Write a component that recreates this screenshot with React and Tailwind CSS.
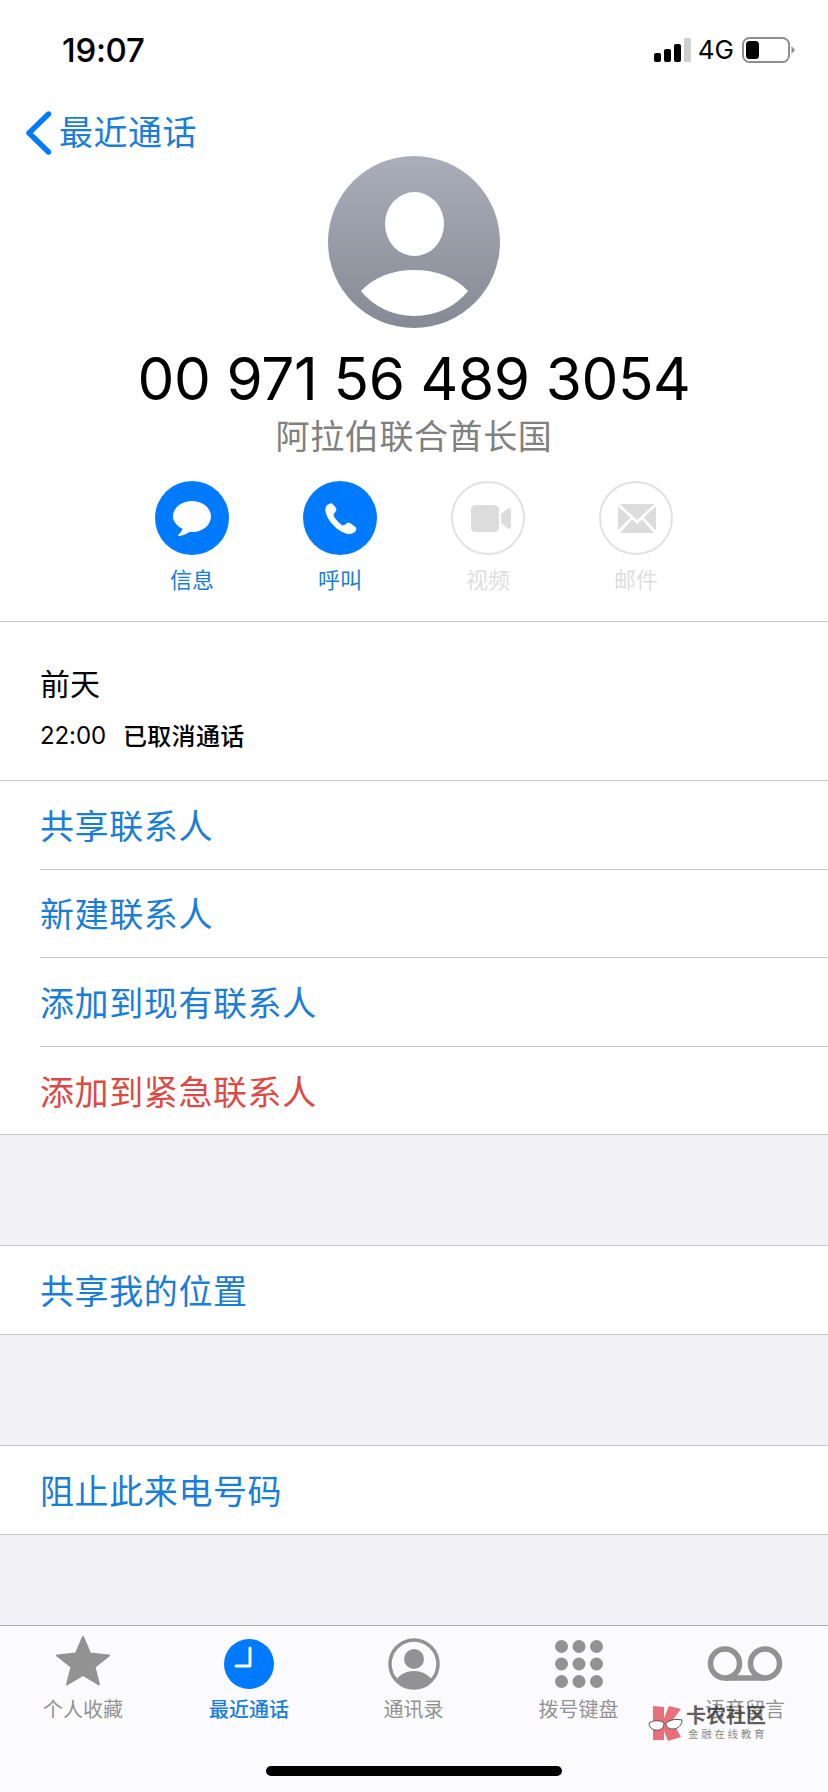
const CJK = { fontFamily: '"Noto Sans CJK SC", sans-serif' };

function Signal() {
  return (
    <svg width="38" height="24" viewBox="0 0 38 24" className="block">
      <rect x="0" y="15" width="7" height="9" rx="2" fill="#000" />
      <rect x="10" y="11" width="7" height="13" rx="2" fill="#000" />
      <rect x="20" y="6" width="7" height="18" rx="2" fill="#000" />
      <rect x="30" y="0" width="7" height="24" rx="1.5" fill="#cfcfcf" />
    </svg>
  );
}

function Battery() {
  return (
    <svg width="54" height="26" viewBox="0 0 54 26" className="block">
      <rect x="1" y="1" width="46" height="24" rx="6.5" fill="none" stroke="#8e8e8e" strokeWidth="2" />
      <rect x="4" y="4" width="13" height="18" rx="3.5" fill="#000" />
      <path d="M49.5 9 L53 13 L49.5 17 Z" fill="#8e8e8e" />
    </svg>
  );
}

function Avatar() {
  return (
    <svg width="172" height="172" viewBox="0 0 172 172" className="block">
      <defs>
        <linearGradient id="av" x1="0" y1="0" x2="0" y2="1">
          <stop offset="0" stopColor="#a9aeba" />
          <stop offset="1" stopColor="#858a95" />
        </linearGradient>
      </defs>
      <circle cx="86" cy="86" r="86" fill="url(#av)" />
      <ellipse cx="86.5" cy="68" rx="29.5" ry="32" fill="#fff" />
      <path d="M33 135 C46 121 65 114 86 114 C108 114 127 121 140 135 C127 151 108 160 86 160 C65 160 46 151 33 135 Z" fill="#fff" />
    </svg>
  );
}

function Action({ label, active, children }) {
  return (
    <div className="w-[148px] flex flex-col items-center">
      <div className={active ? "w-[74px] h-[74px] rounded-full bg-[#007aff]" : "w-[74px] h-[74px] rounded-full border-2 border-[#e2e2e2] bg-white"}>
        <svg width="74" height="74" viewBox="0 0 74 74" className={active ? "block" : "block -m-[2px]"}>{children}</svg>
      </div>
      <div style={CJK} className={active ? "mt-[7px] text-[22px] leading-[32px] text-[#1a7dd6]" : "mt-[7px] text-[22px] leading-[32px] text-[#dedede]"}>{label}</div>
    </div>
  );
}

function Row({ children, red, inset }) {
  return (
    <div className={inset ? "pl-[40px] bg-white" : "bg-white"}>
      <div className={"border-b border-[#c8c8cc] " + (inset ? "" : "pl-[40px] ") + "h-[88.6px] flex items-center"}>
        <span style={CJK} className={(red ? "text-[#dc4a44]" : "text-[#1a7dd6]") + " text-[34px] leading-none tracking-[0.6px]"}>{children}</span>
      </div>
    </div>
  );
}

function Tab({ w, label, active, children }) {
  return (
    <div className="flex flex-col items-center shrink-0" style={{ width: w }}>
      <div className="h-[56px] w-full flex items-center justify-center">{children}</div>
      <div style={CJK} className={(active ? "text-[#1a7dd6] font-medium" : "text-[#929292]") + " mt-[3px] text-[20px] leading-[28px] whitespace-nowrap"}>{label}</div>
    </div>
  );
}

export default function App() {
  return (
    <div className="relative w-[828px] h-[1792px] overflow-hidden bg-white flex flex-col" style={{ fontFamily: 'Inter, "Noto Sans CJK SC", sans-serif' }}>
      {/* status bar */}
      <div className="h-[88px] shrink-0 flex items-start justify-between pl-[62px] pr-[32px] pt-[30px]">
        <span className="text-[33px] leading-[40px] font-medium text-black tracking-[-0.3px]">19:07</span>
        <div className="flex items-center gap-[8px] pt-[7px]">
          <Signal />
          <span className="-ml-[2px] text-[26px] leading-[26px] text-black">4G</span>
          <Battery />
        </div>
      </div>

      {/* nav */}
      <div className="h-[68px] shrink-0 flex items-start pl-[25px] pt-[23px]">
        <svg width="28" height="44" viewBox="0 0 28 44" className="block">
          <path d="M23.5 3 L4 22 L23.5 41" fill="none" stroke="#007aff" strokeWidth="5.4" strokeLinecap="round" strokeLinejoin="round" />
        </svg>
        <span style={CJK} className="ml-[6px] -mt-[2px] text-[34px] leading-[44px] tracking-[0.5px] text-[#1a7dd6]">最近通话</span>
      </div>

      {/* avatar + name */}
      <div className="flex flex-col items-center shrink-0">
        <Avatar />
        <div className="mt-[14px] text-[58.5px] leading-[74px] text-black tracking-[-0.4px] whitespace-nowrap">00 971 56 489 3054</div>
        <div style={CJK} className="text-[34px] leading-[38px] text-[#808080] tracking-[0.6px]">阿拉伯联合酋长国</div>
      </div>

      {/* actions */}
      <div className="mt-[27px] flex justify-center shrink-0">
        <Action label="信息" active>
          <path d="M37 20 C47.5 20 56 27 56 35.5 C56 44 47.5 51 38 51 C37 51 36 51 35 50.8 C32 53 28 54.8 24 55 C23 55 22.8 54 23.5 53.5 C25.5 52 27 50 27.5 47.8 C22 45 18 40.5 18 35.5 C18 27 26.500 20 37 20 Z" fill="#fff" />
        </Action>
        <Action label="呼叫" active>
          <path d="M26 23 C23 24 22 27 22.500 30 C24 40 35 51 45 53 C48 53.500 51.500 52 53 49.500 C53.500 48 53.500 47 52.500 46 L47 42 C46 41.300 45 41.300 44 42 L41.500 44 C40.500 44.500 39.500 44.500 38.500 43.800 C35 41 33 38.500 31 35.500 C30.500 34.500 30.500 33.500 31.200 32.500 L33 30 C33.500 29 33.500 28 33 27 L29.500 23 C28.500 22 27.500 22.300 26 23 Z" fill="#fff" />
        </Action>
        <Action label="视频">
          <rect x="20" y="24" width="28" height="27" rx="4.5" fill="#dcdcdc" />
          <path d="M50 33 L57 27.500 Q60 26 60 29 V46 Q60 49 57 47.500 L50 42 Z" fill="#dcdcdc" />
        </Action>
        <Action label="邮件">
          <path d="M20.500 23 H55.500 L38 39 Z" fill="#dcdcdc" />
          <path d="M19 25.500 V49.500 L31.500 36.500 Z" fill="#dcdcdc" />
          <path d="M57 25.500 V49.500 L44.500 36.500 Z" fill="#dcdcdc" />
          <path d="M21 52 L33 38.500 L38 43 L43 38.500 L55 52 Z" fill="#dcdcdc" />
        </Action>
      </div>

      {/* call info */}
      <div className="mt-[27px] shrink-0 h-[159px] border-t border-[#c8c8cc] pl-[40px] pt-[42px]">
        <div style={CJK} className="text-[30px] leading-[36px] text-black">前天</div>
        <div className="mt-[19px] flex items-center h-[32px]">
          <span className="mt-[2px] text-[24px] leading-[32px] text-black tracking-[-0.1px]">22:00</span>
          <span style={CJK} className="ml-[17px] text-[24px] leading-[32px] text-black font-medium tracking-[0.3px]">已取消通话</span>
        </div>
      </div>

      <div className="border-t border-[#c8c8cc] shrink-0">
        <Row inset>共享联系人</Row>
        <Row inset>新建联系人</Row>
        <Row inset>添加到现有联系人</Row>
        <Row red>添加到紧急联系人</Row>
      </div>

      {/* grey area */}
      <div className="flex-1 bg-[#f1f1f6] flex flex-col">
        <div className="h-[110px] shrink-0" />
        <div className="border-t border-[#c8c8cc]"><Row>共享我的位置</Row></div>
        <div className="h-[110px] shrink-0" />
        <div className="border-t border-[#c8c8cc]"><Row>阻止此来电号码</Row></div>
      </div>

      {/* tab bar */}
      <div className="h-[167px] shrink-0 border-t border-[#a9a9ad] bg-[#fbfbfd] flex flex-col">
        <div className="flex pt-[10px]">
          <Tab w={166} label="个人收藏">
            <svg width="56" height="52" viewBox="0 0 56 52" className="block -mt-[6px]">
              <path d="M28 2 L35 18.500 L54 20.500 L39.500 32 L44 49.500 L28 40 L12 49.500 L16.500 32 L2 20.500 L21 18.500 Z" fill="#929292" stroke="#929292" strokeWidth="2" strokeLinejoin="round" />
            </svg>
          </Tab>
          <Tab w={166} label="最近通话" active>
            <svg width="50" height="50" viewBox="0 0 50 50" className="block">
              <circle cx="25" cy="25" r="25" fill="#007aff" />
              <path d="M26 9 V27 H12" fill="none" stroke="#fff" strokeWidth="3" strokeLinecap="round" strokeLinejoin="round" />
            </svg>
          </Tab>
          <Tab w={163} label="通讯录">
            <svg width="52" height="52" viewBox="0 0 52 52" className="block">
              <defs><clipPath id="cc"><circle cx="26" cy="26" r="24" /></clipPath></defs>
              <circle cx="26" cy="26" r="24" fill="none" stroke="#929292" strokeWidth="3.500" />
              <circle cx="26" cy="21" r="10" fill="#929292" />
              <path d="M4 52 C6 39 16 33 26 33 C36 33 46 39 48 52 Z" fill="#929292" clipPath="url(#cc)" />
            </svg>
          </Tab>
          <Tab w={167} label="拨号键盘">
            <svg width="48" height="48" viewBox="0 0 48 48" className="block">
              {[6.500, 24, 41.500].flatMap((y) => [6.500, 24, 41.500].map((x) => <circle key={x + "-" + y} cx={x} cy={y} r="6.500" fill="#929292" />))}
            </svg>
          </Tab>
          <Tab w={166} label="语音留言">
            <svg width="76" height="36" viewBox="0 0 76 36" className="block">
              <circle cx="18" cy="17.500" r="14.500" fill="none" stroke="#929292" strokeWidth="5.500" />
              <circle cx="58" cy="17.500" r="14.500" fill="none" stroke="#929292" strokeWidth="5.500" />
              <path d="M18 32 H58" fill="none" stroke="#929292" strokeWidth="5.500" />
            </svg>
          </Tab>
        </div>
        <div className="mt-auto mb-[16px] mx-auto w-[296px] h-[10px] rounded-full bg-black" />
      </div>

      {/* watermark */}
      <div className="absolute left-[648px] top-[1705px] flex items-start gap-[2px] pointer-events-none">
        <svg width="36" height="36" viewBox="0 0 36 36" className="block">
          <path d="M5 1 L16 2 L16 13 L21 1 L33 4 L24 16 L33 32 L20 36 L16 26 L16 35 L5 35 Z" fill="#ea6f7d" />
          <path d="M1 18 C6 15 12 15 16 18 C16 23 12 26 8 25 C4 25 1 22 1 18 Z M18 18 C23 14 29 14 34 15 C34 20 30 24 25 24 C21 24 18 22 18 18 Z" fill="#fff" stroke="#555" strokeWidth="1" />
        </svg>
        <div className="flex flex-col -mt-[2px]">
          <div style={CJK} className="text-[20px] leading-[24px] font-bold text-[#333333]/80 whitespace-nowrap">卡农社区</div>
          <div style={CJK} className="text-[10.500px] leading-[14px] text-[#8a8a8a] tracking-[2.700px] whitespace-nowrap pl-[2px]">金融在线教育</div>
        </div>
      </div>
    </div>
  );
}
